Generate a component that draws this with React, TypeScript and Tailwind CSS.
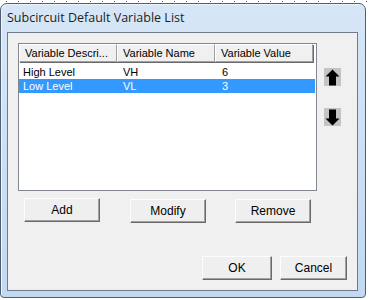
import React from "react";

const rows = [
  { desc: "High Level", name: "VH", value: "6", selected: false },
  { desc: "Low Level", name: "VL", value: "3", selected: true },
];

function ArrowButton({ down }: { down?: boolean }) {
  return (
    <div className="flex h-[18px] w-[17px] items-center justify-center bg-[#c4c4c4]">
      <svg width="15" height="17" viewBox="0 0 15 17" className={down ? "rotate-180" : ""}>
        <path d="M7.5 0.5 L14.5 7.5 L11 7.5 L11 16.5 L4 16.5 L4 7.5 L0.5 7.5 Z" fill="#000" />
      </svg>
    </div>
  );
}

function WinButton({ label, width }: { label: string; width: string }) {
  return (
    <button
      className={`${width} h-[24px] border border-t-[#fdfdfd] border-l-[#fdfdfd] border-b-[#6a6a6a] border-r-[#6a6a6a] bg-[#efefef] text-[12px] text-black shadow-[inset_-1px_-1px_0_#a0a0a0]`}
    >
      {label}
    </button>
  );
}

export default function App() {
  return (
    <div
      className="relative h-[300px] w-[370px] overflow-hidden bg-white"
      style={{ fontFamily: '"Liberation Sans", Arial, sans-serif' }}
    >
      <div className="h-[3px] pt-[1px]">
        <div className="h-[1px] w-full bg-[repeating-linear-gradient(90deg,transparent_0_6px,#3d6b3d_6px_7px,transparent_7px_12px)]" />
      </div>
      <div className="flex h-[295px] w-[366px] flex-col rounded-t-[7px] rounded-b-[4px] border border-[#4f5e70] bg-[linear-gradient(180deg,#d6e6f7,#c2d9f1)] px-[6px] pb-[6px] shadow-[inset_1px_1px_0_#eef5fc]">
        <div
          className="flex h-[28px] items-center pt-[1px] text-[12.5px] text-[#1e1e1e]"
          style={{ fontFamily: '"Open Sans", "Noto Sans", sans-serif' }}
        >
          Subcircuit Default Variable List
        </div>
        <div className="flex w-[351px] flex-1 flex-col border border-[#6d7b8a] bg-[#f0f0f0] px-[10px] pt-[10px]">
          <div className="flex">
            <div className="h-[148px] w-[299px] border border-[#828790] bg-white">
              <div className="flex h-[18px] text-[11px] text-black">
                {["Variable Descri...", "Variable Name", "Variable Value"].map((h) => (
                  <div
                    key={h}
                    className="flex w-[98px] items-center border border-t-white border-l-white border-b-[#a0a0a0] border-r-[#a0a0a0] bg-[#f0f0f0] pl-[5px] shadow-[1px_1px_0_#696969]"
                  >
                    {h}
                  </div>
                ))}
              </div>
              <div className="mt-[3px]">
                {rows.map((r) => (
                  <div
                    key={r.desc}
                    className={`flex h-[14px] w-[296px] items-center text-[11px] ${
                      r.selected ? "bg-[#3399ff] text-white" : "text-black"
                    }`}
                  >
                    <div className="w-[98px] pl-[4px]">{r.desc}</div>
                    <div className="w-[98px] pl-[6px]">{r.name}</div>
                    <div className="w-[98px] pl-[7px]">{r.value}</div>
                  </div>
                ))}
              </div>
            </div>
            <div className="ml-[7px] flex flex-col gap-[22px] pt-[25px]">
              <ArrowButton />
              <ArrowButton down />
            </div>
          </div>
          <div className="mt-[7px] flex pl-[6px]">
            <WinButton label="Add" width="w-[76px]" />
            <div className="ml-[30px]">
              <WinButton label="Modify" width="w-[76px]" />
            </div>
            <div className="ml-[29px]">
              <WinButton label="Remove" width="w-[76px]" />
            </div>
          </div>
          <div className="mt-[33px] flex gap-[8px] pl-[184px]">
            <WinButton label="OK" width="w-[70px]" />
            <WinButton label="Cancel" width="w-[67px]" />
          </div>
        </div>
      </div>
    </div>
  );
}
